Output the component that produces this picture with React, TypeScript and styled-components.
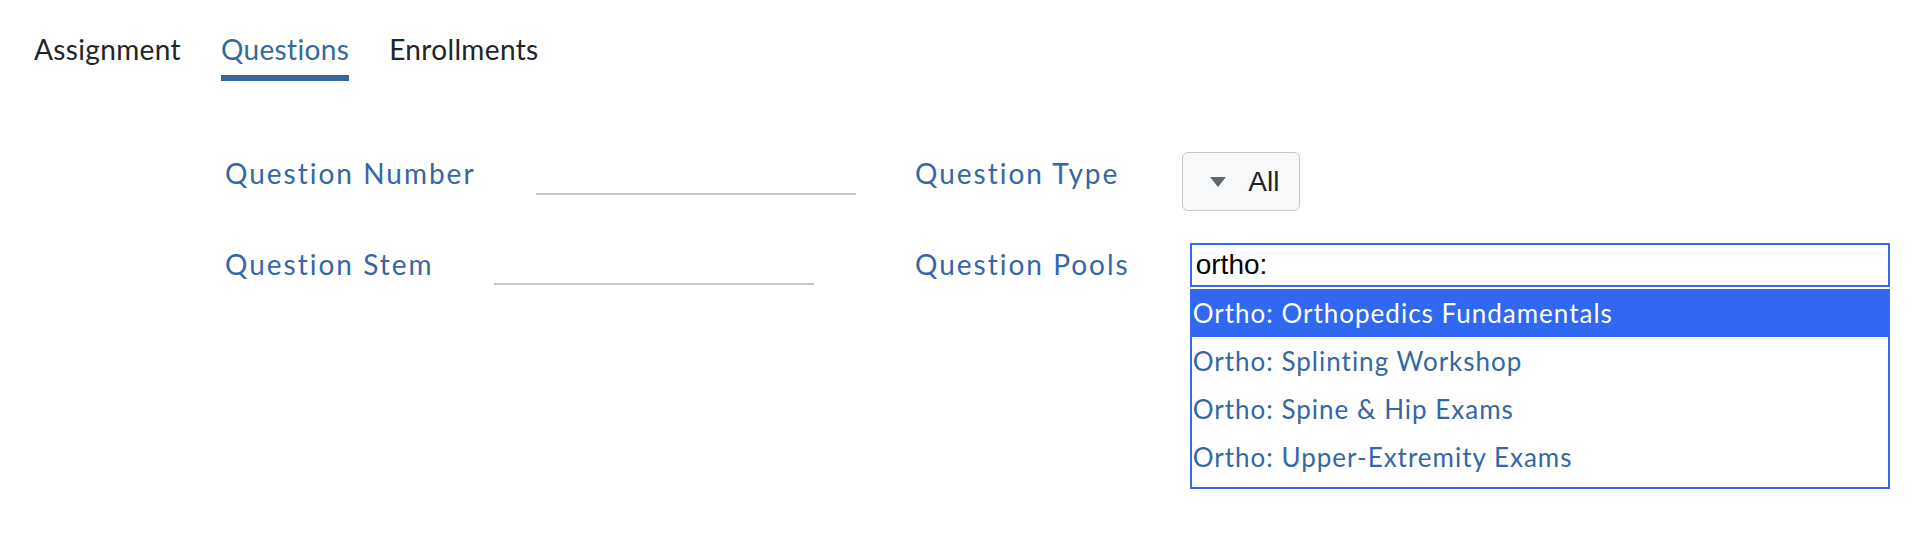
import React, { useState } from 'react';
import styled, { createGlobalStyle } from 'styled-components';

const GlobalStyle = createGlobalStyle`
  html, body {
    margin: 0;
    padding: 0;
    background: #ffffff;
    font-family: 'Lato', 'Open Sans', sans-serif;
  }
`;

const Page = styled.div`
  width: 1926px;
  height: 548px;
  background: #ffffff;
`;

// Tabs
const TabBar = styled.nav`
  display: flex;
  gap: 40px;
  padding: 32px 0 0 34px;
`;

const Tab = styled.a<{ active?: boolean }>`
  font-size: 28px;
  line-height: 34px;
  letter-spacing: 0.35px;
  padding-bottom: 9px;
  border-bottom: 6px solid ${(p) => (p.active ? '#33699e' : 'transparent')};
  color: ${(p) => (p.active ? '#3469a0' : '#212428')};
  text-decoration: none;
  cursor: pointer;
`;

// Filter form
const Form = styled.div`
  display: flex;
  flex-direction: column;
  padding: 71px 0 0 225px;
`;

const Row = styled.div<{ height: number }>`
  display: flex;
  align-items: flex-start;
  height: ${(p) => p.height}px;
  margin-bottom: ${(p) => 91 - p.height}px;
`;

const Group = styled.div<{ width?: number }>`
  display: flex;
  align-items: flex-start;
  gap: 60px;
  width: ${(p) => (p.width ? `${p.width}px` : 'auto')};
  flex-shrink: 0;
`;

const Label = styled.label<{ offset: number }>`
  font-size: 28px;
  line-height: 34px;
  letter-spacing: 2px;
  color: #3566a8;
  margin-top: ${(p) => p.offset}px;
  white-space: nowrap;
`;

const LineInput = styled.input<{ offset: number }>`
  width: 320px;
  height: 38px;
  box-sizing: border-box;
  border: none;
  border-bottom: 2px solid #c8c8c8;
  margin-top: ${(p) => p.offset}px;
  font-family: 'Liberation Sans', Arial, sans-serif;
  font-size: 24px;
  outline: none;
  background: transparent;
`;

const SelectButton = styled.button`
  display: flex;
  align-items: center;
  gap: 22px;
  height: 59px;
  padding: 0 20px 0 27px;
  margin-left: 3px;
  box-sizing: border-box;
  background: #f8f9fa;
  border: 1.5px solid #c5c7ca;
  border-radius: 6px;
  font-family: 'Liberation Sans', Arial, sans-serif;
  font-size: 28px;
  color: #212529;
  cursor: pointer;
`;

const Caret = styled.span`
  width: 0;
  height: 0;
  border-left: 8px solid transparent;
  border-right: 8px solid transparent;
  border-top: 10px solid #5f6770;
`;

const Combo = styled.div`
  position: relative;
  width: 700px;
`;

const SearchInput = styled.input`
  width: 700px;
  height: 44px;
  box-sizing: border-box;
  border: 2px solid #3168ee;
  padding: 0 4px;
  font-family: 'Liberation Sans', Arial, sans-serif;
  font-size: 28px;
  color: #000000;
  outline: none;
  background: #ffffff;
`;

const Menu = styled.ul`
  position: absolute;
  top: 46px;
  left: 0;
  width: 700px;
  box-sizing: border-box;
  margin: 0;
  padding: 0 0 6px;
  list-style: none;
  border: 2px solid #3168ee;
  border-top: none;
  background: #ffffff;
`;

const MenuItem = styled.li<{ active?: boolean }>`
  height: 48px;
  line-height: 48px;
  padding-left: 1px;
  font-size: 26px;
  letter-spacing: 1px;
  color: ${(p) => (p.active ? '#ffffff' : '#3566a8')};
  background: ${(p) => (p.active ? '#3068f2' : 'transparent')};
  white-space: nowrap;
  cursor: pointer;
  &:first-child {
    margin: 0 -2px;
    padding-left: 3px;
  }
`;

const pools = [
  'Ortho: Orthopedics Fundamentals',
  'Ortho: Splinting Workshop',
  'Ortho: Spine & Hip Exams',
  'Ortho: Upper-Extremity Exams',
];

export default function App() {
  const [query, setQuery] = useState('ortho:');
  const tabs = ['Assignment', 'Questions', 'Enrollments'];

  return (
    <Page>
      <GlobalStyle />
      <TabBar>
        {tabs.map((t) => (
          <Tab key={t} active={t === 'Questions'}>
            {t}
          </Tab>
        ))}
      </TabBar>

      <Form>
        <Row height={59}>
          <Group width={690}>
            <Label offset={4}>Question Number</Label>
            <LineInput offset={5} />
          </Group>
          <Group>
            <Label offset={4}>Question Type</Label>
            <SelectButton>
              <Caret />
              All
            </SelectButton>
          </Group>
        </Row>
        <Row height={44}>
          <Group width={690}>
            <Label offset={4}>Question Stem</Label>
            <LineInput offset={4} />
          </Group>
          <Group>
            <Label offset={4}>Question Pools</Label>
            <Combo>
              <SearchInput value={query} onChange={(e) => setQuery(e.target.value)} />
              <Menu>
                {pools.map((p, i) => (
                  <MenuItem key={p} active={i === 0}>
                    {p}
                  </MenuItem>
                ))}
              </Menu>
            </Combo>
          </Group>
        </Row>
      </Form>
    </Page>
  );
}
